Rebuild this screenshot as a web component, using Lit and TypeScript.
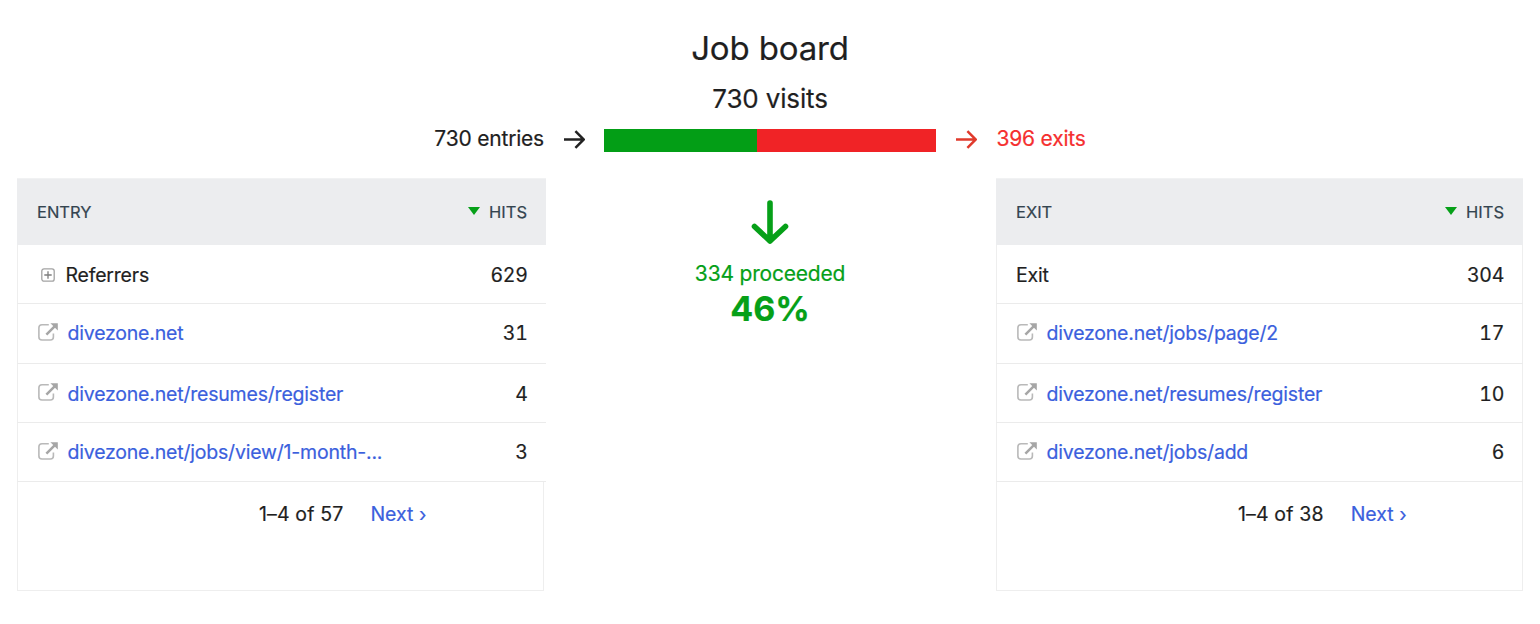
import { LitElement, html, svg, css, nothing } from "lit";
import { customElement, property } from "lit/decorators.js";

interface Row {
  label: string;
  hits: number;
  kind: "group" | "link" | "plain";
}

const entryRows: Row[] = [
  { label: "Referrers", hits: 629, kind: "group" },
  { label: "divezone.net", hits: 31, kind: "link" },
  { label: "divezone.net/resumes/register", hits: 4, kind: "link" },
  { label: "divezone.net/jobs/view/1-month-...", hits: 3, kind: "link" },
];

const exitRows: Row[] = [
  { label: "Exit", hits: 304, kind: "plain" },
  { label: "divezone.net/jobs/page/2", hits: 17, kind: "link" },
  { label: "divezone.net/resumes/register", hits: 10, kind: "link" },
  { label: "divezone.net/jobs/add", hits: 6, kind: "link" },
];

const arrowPath = svg`<path d="M1 10.5H20.6M12.4 2.2L20.8 10.5L12.4 18.8" />`;

@customElement("hits-table")
export class HitsTable extends LitElement {
  @property() heading = "";
  @property({ type: Number }) total = 0;
  @property({ attribute: false }) rows: Row[] = [];

  static styles = css`
    :host {
      display: block;
      box-sizing: border-box;
      height: 413px;
    }
    .table {
      display: grid;
      grid-template-rows: 67px 59px 60px 59px 59px 109px;
    }
    .head,
    .row {
      display: flex;
      align-items: center;
      justify-content: space-between;
      box-sizing: border-box;
    }
    .head {
      background: #ecedef;
      color: #34444f;
      font-size: 16.5px;
      padding: 0 19px 1px 20px;
      border-top: 1px solid #f1f2f3;
    }
    .row {
      border-left: 1px solid #eeeeee;
      border-right: var(--row-edge, 0 solid transparent);
      border-bottom: 1px solid #ebebeb;
      padding: 0 var(--row-right, 18.5px) 0 19px;
      font-size: 19.5px;
    }
    .name,
    .hits {
      display: flex;
      align-items: center;
    }
    .name {
      letter-spacing: -0.2px;
    }
    .count {
      font-variant-numeric: tabular-nums;
      letter-spacing: -0.3px;
    }
    .sort {
      width: 12px;
      height: 8px;
      margin: 0 9px 1px 0;
    }
    .plus {
      width: 14px;
      height: 14px;
      margin: 0 10.5px 0 4px;
    }
    .ext {
      width: 20px;
      height: 18px;
      margin: 0 9.5px 3px 1px;
    }
    .row:nth-child(2) {
      padding-top: 1px;
    }
    .row:nth-child(3) {
      padding-bottom: 1px;
    }
    .row:nth-child(4) {
      padding-top: 1px;
    }
    .link {
      color: #3b5fdd;
    }
    .foot {
      display: flex;
      align-items: flex-start;
      gap: 27px;
      box-sizing: border-box;
      width: var(--foot-width, 100%);
      border: 1px solid #eeeeee;
      border-top: 0;
      padding: 20px 0 0 241px;
      font-size: 19.5px;
      line-height: 24px;
    }
    .range {
      letter-spacing: 0.15px;
    }
  `;

  private icon(kind: Row["kind"]) {
    if (kind === "group")
      return html`<svg class="plus" viewBox="0 0 14 14" fill="none" stroke="#a3a3a3" stroke-width="1.3">
        <rect x=".8" y=".8" width="12.4" height="12.4" rx="2.2" />
        <path d="M3.3 7H10.7M7 3.3V10.7" stroke="#7d7d7d" />
      </svg>`;
    if (kind === "link")
      return html`<svg class="ext" viewBox="0 0 20 18" fill="none">
        <path d="M10.8 1.8H4Q.9 1.8 .9 4.8V14Q.9 17 4 17H12.4Q15.4 17 15.4 14V10.6" stroke="#b9b9b9" stroke-width="1.6" />
        <path d="M8.4 11.6L16.6 3.4" stroke="#a6a6a6" stroke-width="2.5" />
        <path d="M12.4 .2H19.8V7.6Z" fill="#a6a6a6" />
      </svg>`;
    return nothing;
  }

  render() {
    return html`<div class="table">
      <div class="head">
        <span>${this.heading}</span>
        <span class="hits">
          <svg class="sort" viewBox="0 0 12 8"><path d="M0 0H12L6 8Z" fill="#06a018" /></svg>HITS
        </span>
      </div>
      ${this.rows.map(
        (r) => html`<div class="row">
          <span class="name">${this.icon(r.kind)}<span class=${r.kind === "link" ? "link" : "text"}>${r.label}</span></span>
          <span class="count">${r.hits}</span>
        </div>`
      )}
      <div class="foot"><span class="range">1–4 of ${this.total}</span><span class="link">Next ›</span></div>
    </div>`;
  }
}

@customElement("app-root")
export class AppRoot extends LitElement {
  static styles = css`
    :host {
      display: block;
      box-sizing: border-box;
      width: 1540px;
      height: 624px;
      overflow: hidden;
      padding-top: 28px;
      background: #fff;
      color: #1f1f1f;
      font-family: Inter, "Liberation Sans", sans-serif;
      -webkit-text-stroke: 0.2px currentColor;
    }
    .title,
    .visits {
      text-align: center;
    }
    .title {
      font-size: 33px;
      line-height: 40px;
      letter-spacing: -0.15px;
    }
    .visits {
      font-size: 26px;
      line-height: 32px;
      letter-spacing: -0.15px;
      margin-top: 15px;
    }
    .flow {
      display: grid;
      grid-template-columns: 544px 60px 332px 60px 1fr;
      align-items: center;
      height: 24px;
      margin-top: 13px;
      font-size: 21px;
      line-height: 22px;
      letter-spacing: -0.2px;
    }
    .entries {
      text-align: right;
      padding-bottom: 3px;
    }
    .exits {
      color: #f52f2f;
      padding: 0 0 3px 0.5px;
    }
    .arrow {
      width: 22px;
      height: 21px;
      justify-self: center;
      margin-bottom: 2px;
      fill: none;
      stroke: #222;
      stroke-width: 2.5;
    }
    .arrow.out {
      stroke: #e03a2c;
    }
    .bar {
      display: flex;
      height: 23px;
      background: #f02326;
    }
    .stay {
      background: #039e16;
    }
    .body {
      display: grid;
      grid-template-columns: 529px 1fr 527px;
      padding: 0 17px;
      margin-top: 26px;
    }
    .entry {
      --foot-width: 527px;
    }
    .exit {
      --row-edge: 1px solid #eeeeee;
      --row-right: 18px;
    }
    .center {
      display: flex;
      flex-direction: column;
      align-items: center;
      color: #06a018;
      padding: 22px 2px 0 0;
    }
    .down {
      width: 38px;
      height: 44px;
      fill: none;
      stroke: #06a018;
      stroke-width: 5.6;
      stroke-linecap: round;
      stroke-linejoin: round;
    }
    .proceeded {
      font-size: 21px;
      line-height: 26px;
      letter-spacing: -0.2px;
      margin-top: 17px;
    }
    .percent {
      font-size: 34px;
      line-height: 40px;
      font-weight: 700;
      margin-top: 2px;
    }
  `;

  render() {
    return html`
      <div class="title">Job board</div>
      <div class="visits">730 visits</div>
      <div class="flow">
        <span class="entries">730 entries</span>
        <svg class="arrow" viewBox="0 0 22 21">${arrowPath}</svg>
        <div class="bar"><div class="stay" style="width:${Math.round((334 / 730) * 100)}%"></div></div>
        <svg class="arrow out" viewBox="0 0 22 21">${arrowPath}</svg>
        <span class="exits">396 exits</span>
      </div>
      <div class="body">
        <hits-table class="entry" heading="ENTRY" .rows=${entryRows} .total=${57}></hits-table>
        <div class="center">
          <svg class="down" viewBox="0 0 38 44"><path d="M19 3V41M3.5 26.5L19 41L34.5 26.5" /></svg>
          <div class="proceeded">334 proceeded</div>
          <div class="percent">46%</div>
        </div>
        <hits-table class="exit" heading="EXIT" .rows=${exitRows} .total=${38}></hits-table>
      </div>
    `;
  }
}
